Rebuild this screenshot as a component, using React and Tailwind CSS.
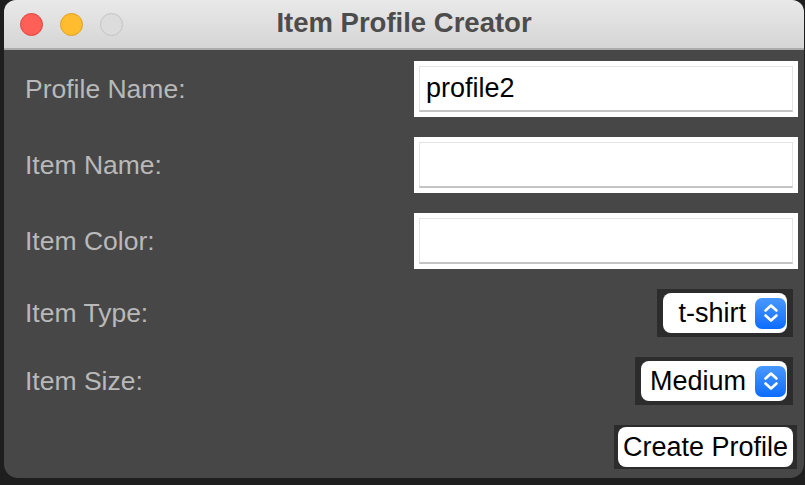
import React from "react";

const font = { fontFamily: '"Liberation Sans", Arial, sans-serif' };

function TextField({ value = "" }) {
  return (
    <div className="bg-white p-[5px] w-[384px] h-[56px]">
      <div className="h-full border border-[#e4e4e4] border-b-[#c4c4c4] border-b-2 flex items-center px-[6px] text-[27px] text-black">
        {value}
      </div>
    </div>
  );
}

function Stepper() {
  return (
    <div className="w-[31px] h-[31px] rounded-[7px] bg-gradient-to-b from-[#4798ff] to-[#0a6cff] flex items-center justify-center">
      <svg width="18" height="24" viewBox="0 0 18 24" fill="none">
        <path d="M3.5 9.5 L9 4.5 L14.5 9.5" stroke="white" strokeWidth="2.6" strokeLinecap="round" strokeLinejoin="round" />
        <path d="M3.5 14.5 L9 19.5 L14.5 14.5" stroke="white" strokeWidth="2.6" strokeLinecap="round" strokeLinejoin="round" />
      </svg>
    </div>
  );
}

function Select({ value, width }) {
  return (
    <div className="bg-[#2c2c2c] px-[6px] py-[4px] mr-[11px]">
      <div className={`bg-white rounded-[8px] h-[40px] flex items-center justify-end gap-[9px] pr-[1px] ${width}`}>
        <span className="text-[27px] text-black leading-none">{value}</span>
        <Stepper />
      </div>
    </div>
  );
}

function Row({ label, children }) {
  return (
    <div className="flex items-center justify-between">
      <span className="text-[26.5px] text-[#b9b9b9] leading-none">{label}</span>
      {children}
    </div>
  );
}

export default function App() {
  return (
    <div className="w-[805px] h-[485px] bg-[#1e1e1e] pl-[4px] overflow-hidden" style={font}>
      <div className="w-[800px] h-[478px] rounded-b-[14px] rounded-t-[12px] bg-[#474747] flex flex-col overflow-hidden">
        <div className="h-[50px] bg-gradient-to-b from-[#e9e9e9] to-[#d5d5d5] border-b-2 border-[#ababab] flex items-center relative">
          <div className="flex gap-[17px] pl-[16px]">
            <span className="w-[23px] h-[23px] rounded-full bg-[#fe5f57] border border-[#e0443e]" />
            <span className="w-[23px] h-[23px] rounded-full bg-[#febc2e] border border-[#dea123]" />
            <span className="w-[23px] h-[23px] rounded-full bg-[#dcdcdc] border border-[#c4c4c4]" />
          </div>
          <div className="absolute inset-0 flex items-center justify-center pb-[2px]">
            <span className="text-[27.5px] font-bold text-[#4c4c4c]">Item Profile Creator</span>
          </div>
        </div>
        <div className="flex flex-col gap-[20px] pt-[11px] pl-[21px]">
          <Row label="Profile Name:">
            <div className="mr-[6px]">
              <TextField value="profile2" />
            </div>
          </Row>
          <Row label="Item Name:">
            <div className="mr-[6px]">
              <TextField />
            </div>
          </Row>
          <Row label="Item Color:">
            <div className="mr-[6px]">
              <TextField />
            </div>
          </Row>
          <Row label="Item Type:">
            <Select value="t-shirt" width="w-[124px]" />
          </Row>
          <Row label="Item Size:">
            <Select value="Medium" width="w-[146px]" />
          </Row>
          <div className="flex justify-end">
            <div className="bg-[#2c2c2c] px-[4px] py-[2px] mr-[7px]">
              <div className="bg-white rounded-[8px] h-[40px] w-[175px] flex items-center justify-center">
                <span className="text-[27px] text-black leading-none">Create Profile</span>
              </div>
            </div>
          </div>
        </div>
      </div>
    </div>
  );
}
